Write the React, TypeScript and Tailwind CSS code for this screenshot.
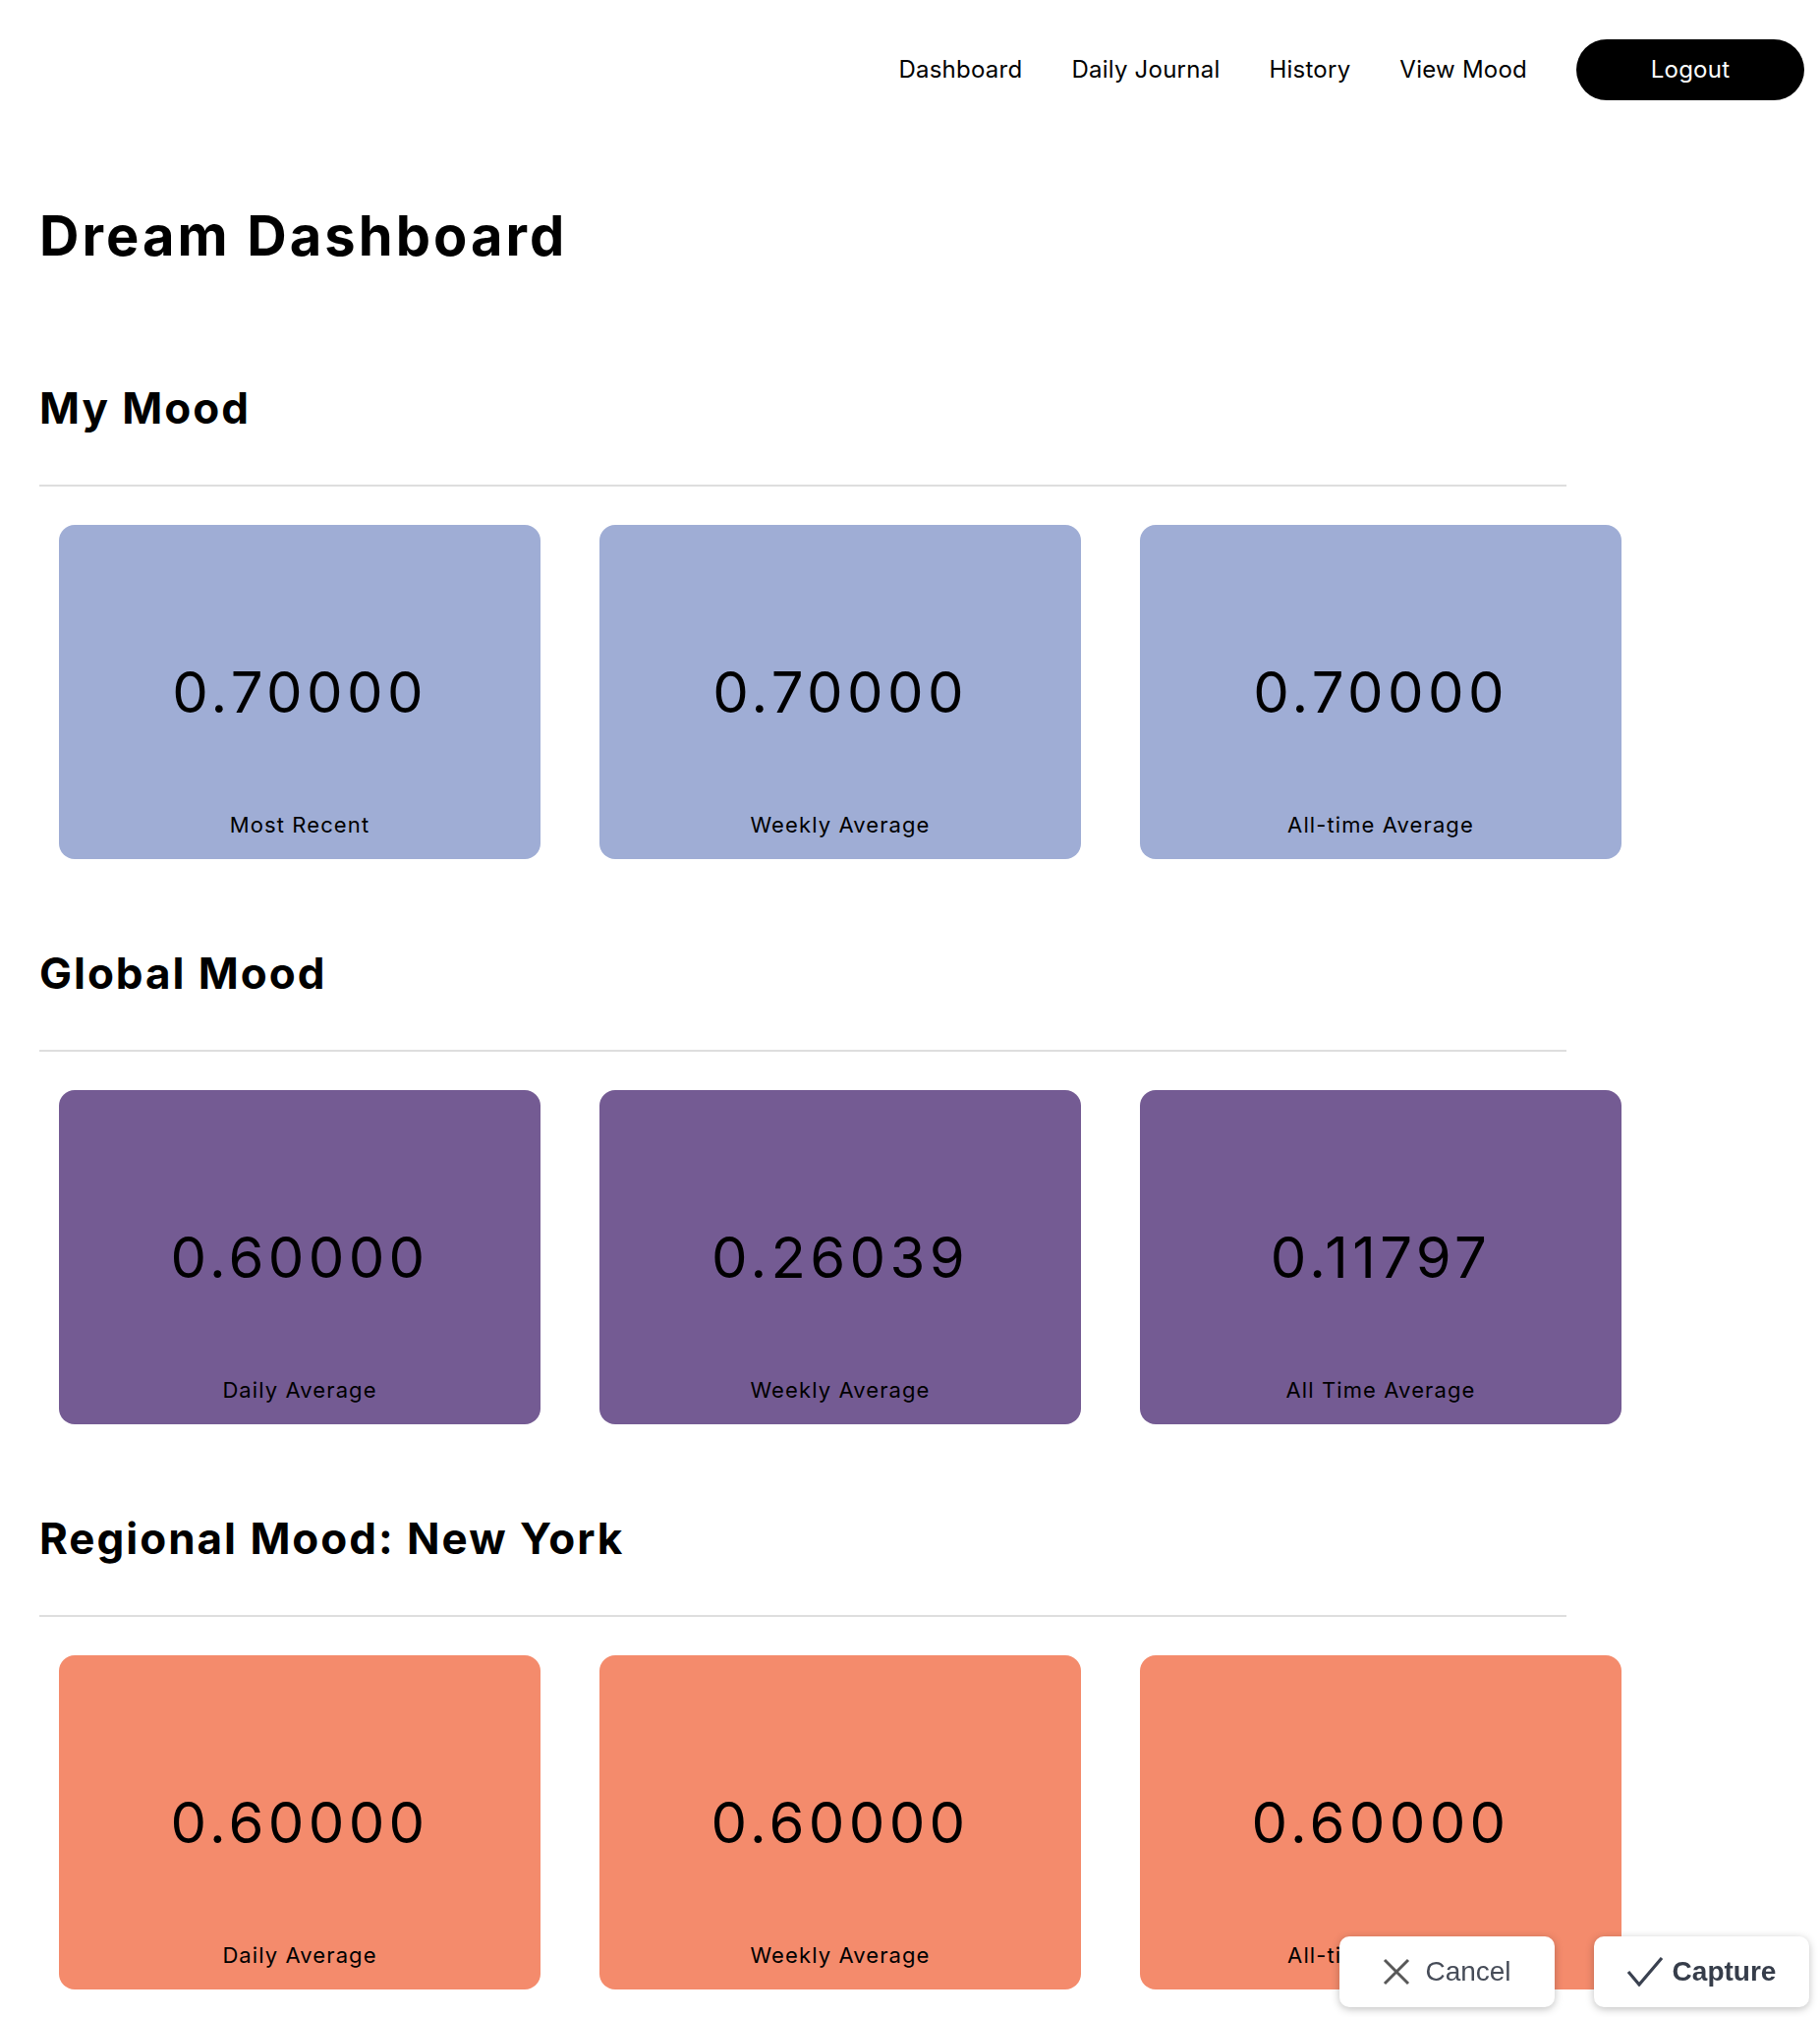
import React from "react";

type Card = { value: string; label: string };

const sections: { title: string; color: string; cards: Card[] }[] = [
  {
    title: "My Mood",
    color: "bg-[#9fadd5]",
    cards: [
      { value: "0.70000", label: "Most Recent" },
      { value: "0.70000", label: "Weekly Average" },
      { value: "0.70000", label: "All-time Average" },
    ],
  },
  {
    title: "Global Mood",
    color: "bg-[#745b93]",
    cards: [
      { value: "0.60000", label: "Daily Average" },
      { value: "0.26039", label: "Weekly Average" },
      { value: "0.11797", label: "All Time Average" },
    ],
  },
  {
    title: "Regional Mood: New York",
    color: "bg-[#f48b6c]",
    cards: [
      { value: "0.60000", label: "Daily Average" },
      { value: "0.60000", label: "Weekly Average" },
      { value: "0.60000", label: "All-time Average" },
    ],
  },
];

function MoodCard({ card, color }: { card: Card; color: string }) {
  return (
    <div
      className={`grid h-[340px] w-[490px] grid-rows-[1fr_auto_1fr] rounded-[16px] ${color}`}
    >
      <div />
      <div className="text-center text-[58px] leading-none tracking-[0.075em] text-black">
        {card.value}
      </div>
      <div className="self-end pb-[24px] text-center text-[22px] leading-none tracking-[0.05em] text-black">
        {card.label}
      </div>
    </div>
  );
}

export default function App() {
  return (
    <div className="relative min-h-screen bg-white font-['Inter',sans-serif] text-black">
      <header className="flex items-center justify-end pr-[16px] pt-[40px]">
        <nav className="flex items-center gap-[50px] text-[24px] leading-none tracking-[0.01em]">
          <a className="text-black">Dashboard</a>
          <a className="text-black">Daily Journal</a>
          <a className="text-black">History</a>
          <a className="text-black">View Mood</a>
          <button className="h-[62px] w-[232px] rounded-full bg-black text-[24px] text-white">
            Logout
          </button>
        </nav>
      </header>

      <main className="px-[40px] pb-[28px] pt-[110px]">
        <h1 className="text-[56px] font-bold leading-none tracking-[0.055em]">Dream Dashboard</h1>

        {sections.map((s, i) => (
          <section key={s.title} className={i === 0 ? "mt-[125px]" : "mt-[94px]"}>
            <h2 className="text-[44px] font-bold leading-none tracking-[0.045em]">{s.title}</h2>
            <div className="mt-[56px] h-[2px] w-[1554px] bg-[#dedede]" />
            <div className="mt-[39px] flex gap-[60px] pl-[20px]">
              {s.cards.map((c, j) => (
                <MoodCard key={j} card={c} color={s.color} />
              ))}
            </div>
          </section>
        ))}
      </main>

      <div className="fixed bottom-[10px] right-[11px] flex gap-[40px] font-['Liberation_Sans',Arial,sans-serif]">
        <button className="flex h-[72px] w-[219px] items-center justify-center gap-[15px] rounded-[10px] bg-white shadow-[0_2px_8px_rgba(0,0,0,0.25)]">
          <svg width="28" height="28" viewBox="0 0 28 28" fill="none">
            <path d="M2 2 L26 26 M26 2 L2 26" stroke="#585858" strokeWidth="3" strokeLinecap="butt" />
          </svg>
          <span className="text-[28px] leading-none text-[#464c58]">Cancel</span>
        </button>
        <button className="flex h-[72px] w-[219px] items-center justify-center gap-[10px] rounded-[10px] bg-white shadow-[0_2px_8px_rgba(0,0,0,0.25)]">
          <svg width="36" height="30" viewBox="0 0 36 30" fill="none">
            <path d="M1 15 L12 28 L35 1" stroke="#3a4150" strokeWidth="3.2" strokeLinejoin="miter" />
          </svg>
          <span className="text-[28px] font-bold leading-none text-[#363d4a]">Capture</span>
        </button>
      </div>
    </div>
  );
}
